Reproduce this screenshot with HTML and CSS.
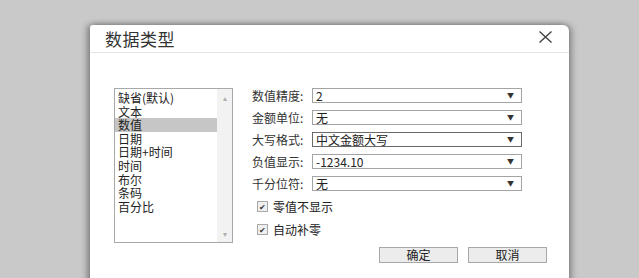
FILE: index.html
```html
<!DOCTYPE html>
<html lang="zh-CN">
<head>
    <meta charset="UTF-8">
    <title>数据类型</title>
    <link rel="stylesheet" href="styles.css">
</head>
<body>
    <div class="dialog">
        <div class="title-bar">
            <span class="title">数据类型</span>
            <svg class="close" width="15" height="12" viewBox="0 0 15 12">
                <path d="M1.5 0.5 L13.5 11.5 M13.5 0.5 L1.5 11.5" stroke="#444" stroke-width="1.4" fill="none"/>
            </svg>
        </div>
        <div class="dialog-body">
            <div class="list-box">
                <ul class="list-items">
                    <li>缺省(默认)</li>
                    <li>文本</li>
                    <li class="selected">数值</li>
                    <li>日期</li>
                    <li>日期+时间</li>
                    <li>时间</li>
                    <li>布尔</li>
                    <li>条码</li>
                    <li>百分比</li>
                </ul>
                <div class="scroll">
                    <span class="scroll-arrow">&#x25B4;</span>
                    <span class="scroll-arrow">&#x25BE;</span>
                </div>
            </div>
            <div class="options">
                <div class="row">
                    <label class="field-label">数值精度:</label>
                    <div class="combo"><span>2</span><span class="arrow">&#x25BC;</span></div>
                </div>
                <div class="row">
                    <label class="field-label">金额单位:</label>
                    <div class="combo"><span>无</span><span class="arrow">&#x25BC;</span></div>
                </div>
                <div class="row">
                    <label class="field-label">大写格式:</label>
                    <div class="combo focused"><span>中文金额大写</span><span class="arrow">&#x25BC;</span></div>
                </div>
                <div class="row">
                    <label class="field-label">负值显示:</label>
                    <div class="combo"><span>-1234.10</span><span class="arrow">&#x25BC;</span></div>
                </div>
                <div class="row">
                    <label class="field-label">千分位符:</label>
                    <div class="combo"><span>无</span><span class="arrow">&#x25BC;</span></div>
                </div>
                <div class="check-row first">
                    <span class="checkbox">&#x2714;</span>
                    <span>零值不显示</span>
                </div>
                <div class="check-row">
                    <span class="checkbox">&#x2714;</span>
                    <span>自动补零</span>
                </div>
                <div class="buttons">
                    <button class="btn">确定</button>
                    <button class="btn">取消</button>
                </div>
            </div>
        </div>
    </div>
</body>
</html>
```

FILE: styles.css
```css
body {
    margin: 0;
    padding: 25px 0 0 90px;
    background-color: #c9c9c9;
    font-family: "Noto Sans CJK SC", "Liberation Sans", sans-serif;
    color: #222;
    overflow: hidden;
    height: 253px;
}

.dialog {
    width: 479px;
    height: 300px;
    background-color: #fff;
    border-radius: 3px 6px 0 0;
    box-shadow: -3px 0 6px rgba(0, 0, 0, 0.35), 3px 0 6px rgba(0, 0, 0, 0.3);
}

.title-bar {
    height: 27px;
    display: flex;
    align-items: center;
    justify-content: space-between;
    padding: 0 16px 0 15px;
    border-bottom: 1px solid #e4e4e4;
}

.title {
    font-size: 17px;
    color: #333;
    letter-spacing: 0.5px;
}

.close {
    margin-top: -3px;
}

.dialog-body {
    display: flex;
    padding: 35px 0 0 24px;
    gap: 19px;
}

.list-box {
    width: 117px;
    height: 153px;
    border: 1px solid #a8a8a8;
    display: flex;
}

.list-items {
    list-style: none;
    margin: 0;
    padding: 2px 0 0 0;
    flex: 1;
}

.list-items li {
    font-size: 12px;
    line-height: 13.6px;
    height: 13.6px;
    padding-left: 3px;
}

.list-items li.selected {
    background-color: #c6c6c6;
}

.scroll {
    width: 15px;
    background-color: #f2f2f2;
    display: flex;
    flex-direction: column;
    justify-content: space-between;
    align-items: center;
    color: #b0b0b0;
    font-size: 8px;
    padding: 3px 0;
}

.options {
    width: 295px;
    font-size: 12px;
}

.row {
    display: flex;
    align-items: center;
    height: 15px;
    margin-bottom: 7px;
}

.field-label {
    width: 60px;
    color: #333;
}

.combo {
    width: 202px;
    height: 13px;
    border: 1px solid #a4a4a4;
    display: flex;
    align-items: center;
    justify-content: space-between;
    padding: 0 3px;
    line-height: 13px;
}

.combo.focused {
    border-color: #6a6a6a;
}

.arrow {
    font-size: 7px;
    color: #333;
    padding-right: 4px;
}

.check-row {
    display: flex;
    align-items: center;
    gap: 5px;
    margin-left: 5px;
    height: 16px;
    margin-bottom: 7px;
}

.check-row.first {
    margin-top: 2px;
}

.checkbox {
    width: 9px;
    height: 9px;
    border: 1px solid #a8a8a8;
    background-color: #efefef;
    font-size: 8px;
    line-height: 9px;
    text-align: center;
    color: #333;
}

.buttons {
    display: flex;
    justify-content: flex-end;
    gap: 10px;
    margin-top: 10px;
}

.btn {
    width: 79px;
    height: 16px;
    border: 1px solid #a8a8a8;
    background-color: #ececec;
    font-family: inherit;
    font-size: 12px;
    color: #222;
    padding: 0;
    line-height: 14px;
}
```
